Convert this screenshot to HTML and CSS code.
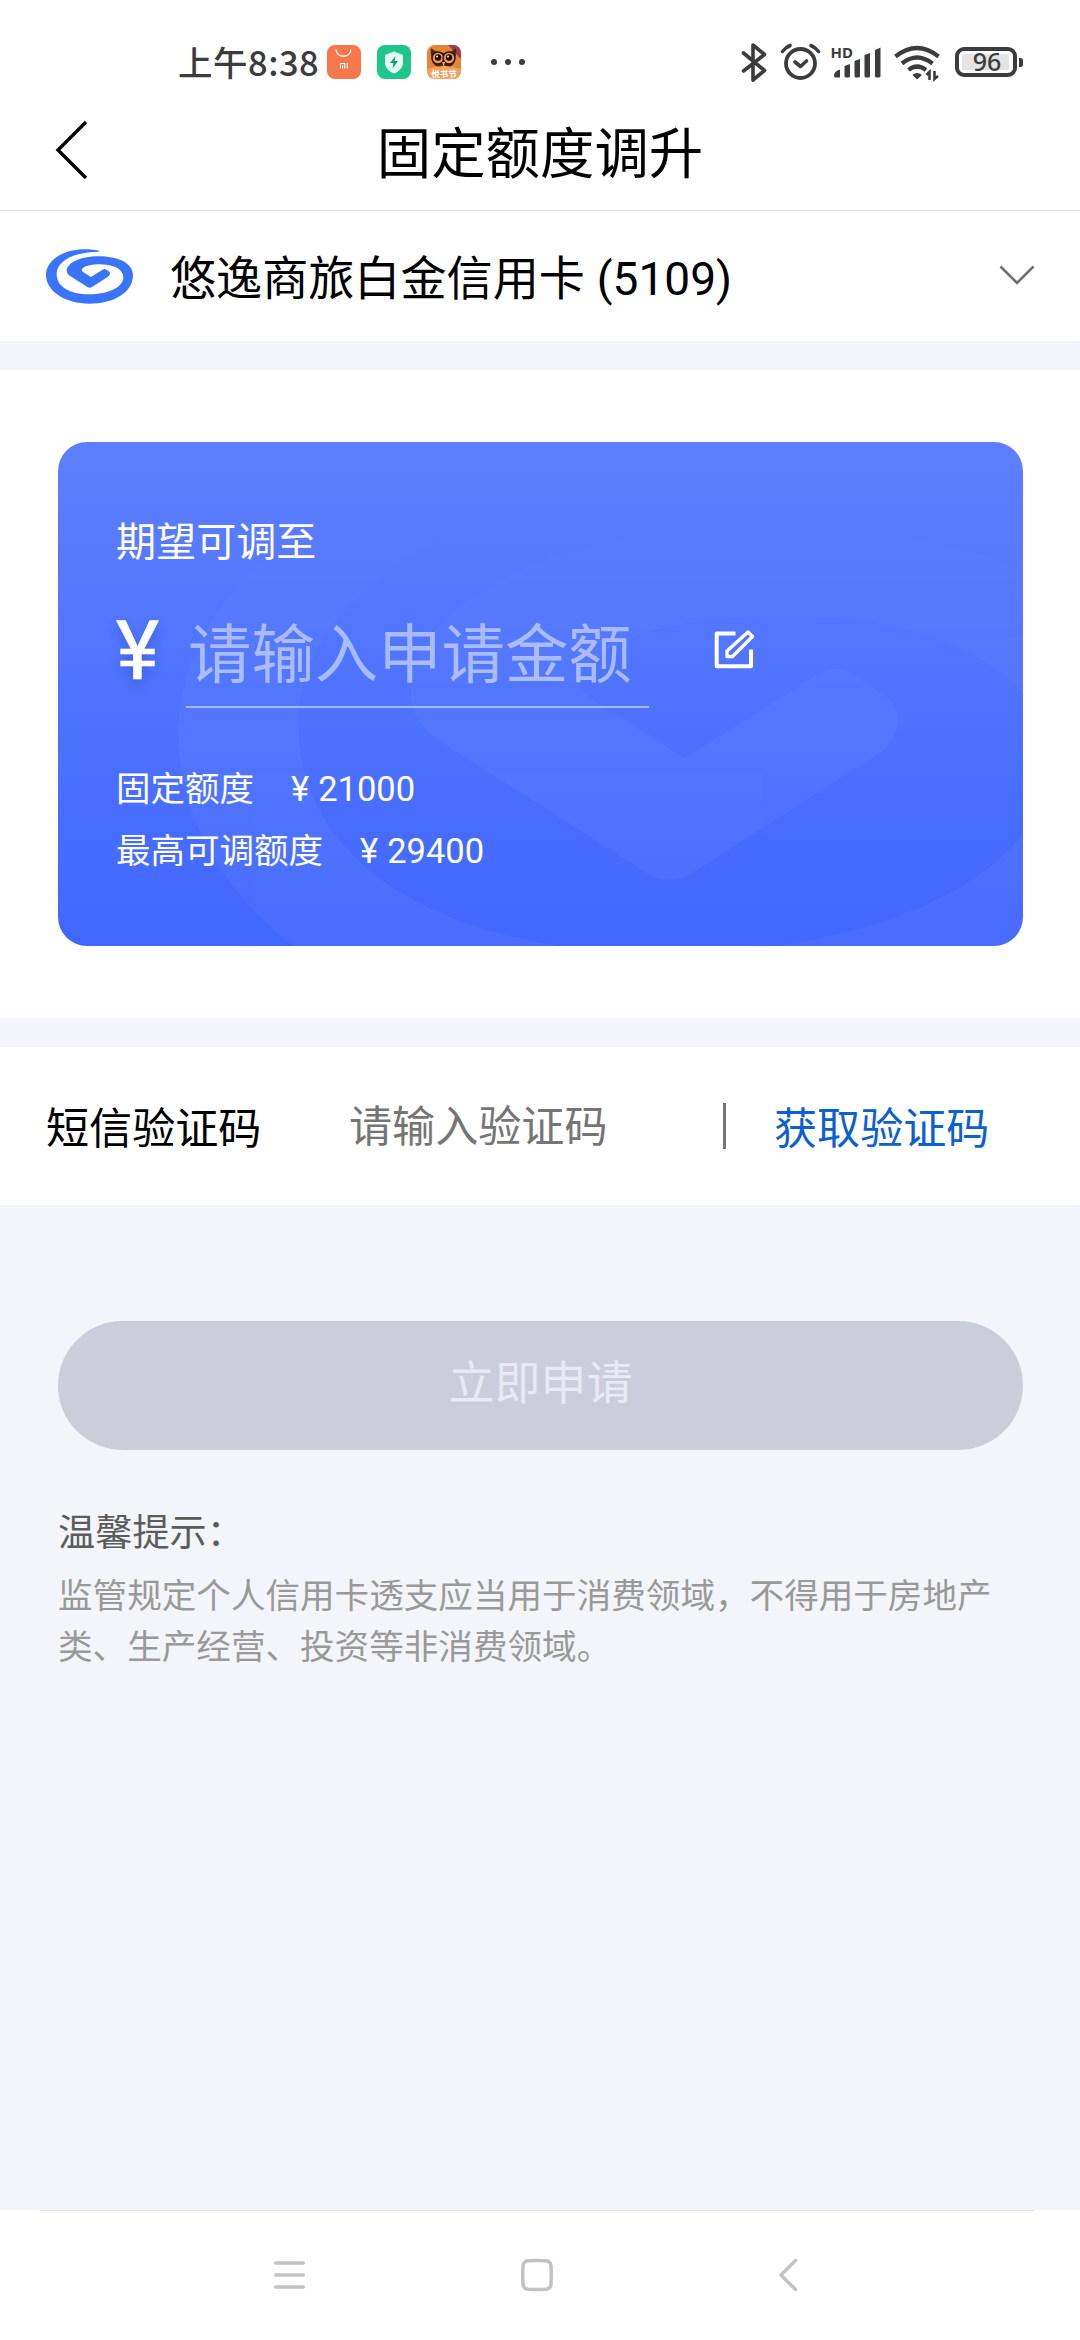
FILE: index.html
```html
<!DOCTYPE html>
<html lang="zh-CN">
<head>
<meta charset="utf-8">
<title>固定额度调升</title>
<link rel="stylesheet" href="styles.css">
</head>
<body>
<svg width="0" height="0" class="defs" aria-hidden="true">
  <symbol id="swirl" viewBox="0 0 330 222">
    <path d="M189 35C150 26 100 30 68 50C42 66 30 86 30 108C30 158 90 194 160 194C235 194 291 160 291 108C291 70 240 52 190 52C130 52 92 72 92 97Q92 104 99 109L154 144Q161 149 168 144L218 112Q226 103 218 97L209 91Q205 89 200 92L165 114L140 98Q134 93 140 88C150 79 172 76 190 76C235 76 262 92 262 115C262 146 215 166 160 166C100 166 62 142 62 105C62 66 115 38 189 38Z"/>
  </symbol>
</svg>
<div class="screen">
  <div class="status">
    <span class="time">上午8:38</span>
    <div class="apps">
      <svg width="34" height="34" viewBox="0 0 34 34"><rect width="34" height="34" rx="8" fill="#f5774a"/><path d="M9 4.500c1 9 14 9 15 0" fill="none" stroke="#fff" stroke-width="1.400"/><path d="M13.500 23.500v-5h4.200v5M15.600 20v3.500M20.200 18v5.500" fill="none" stroke="#fff" stroke-width="1.100"/></svg>
      <svg width="34" height="34" viewBox="0 0 34 34"><rect width="34" height="34" rx="8" fill="#1fc68c"/><path d="M17 6.500l9 3.500v7c0 6-4 9.500-9 11.500c-5-2-9-5.500-9-11.500v-7z" fill="#e5fbf3"/><path d="M18.500 11l-5.500 7h3.500l-1 5.500l5.500-7.500h-3.500z" fill="#159b70"/></svg>
      <svg width="34" height="34" viewBox="0 0 34 34"><defs><clipPath id="r"><rect width="34" height="34" rx="8"/></clipPath></defs><g clip-path="url(#r)"><path d="M0 0h34v34H0z" fill="#e5853c"/><path d="M21 0h13v14z" fill="#a33b50"/><path d="M4 3q4 4 13 5q9-1 12-5q1 6-1 10q0 8-6 9q-3 0-5-2q-2 2-5 2q-7-1-7-9Q3 9 4 3z" fill="#54260f"/><circle cx="11" cy="13" r="6" fill="#ed9b54" stroke="#321408" stroke-width="1.500"/><circle cx="22" cy="13" r="6" fill="#ed9b54" stroke="#321408" stroke-width="1.500"/><circle cx="11" cy="12.500" r="3.200" fill="#1c0e0b"/><circle cx="22" cy="12.500" r="3.200" fill="#1c0e0b"/><circle cx="10" cy="11.500" r="1" fill="#fff"/><circle cx="21" cy="11.500" r="1" fill="#fff"/><path d="M15 17h3l-1.500 4z" fill="#ffb35c"/><path d="M0 24q17-6 34 0v10H0z" fill="#efa362"/></g><text x="17" y="31.500" text-anchor="middle" class="tiny">悦书节</text></svg>
    </div>
    <svg class="dots" width="36" height="8" viewBox="0 0 36 8" fill="#3c3c3c"><circle cx="4" cy="4" r="3"/><circle cx="18" cy="4" r="3"/><circle cx="32" cy="4" r="3"/></svg>
    <svg class="system" width="290" height="42" viewBox="740 41 290 42" fill="none" stroke="#3c3c3c">
      <path d="M743.500 53l21 17.500L753 80V45l11.500 9.500L743.500 71" stroke-width="3.600" stroke-linejoin="round" stroke-linecap="round"/>
      <circle cx="800.500" cy="63.500" r="14.500" stroke-width="3.800"/>
      <path d="M782.500 51.500q3-4 7.500-6M818.500 51.500q-3-4-7.500-6" stroke-width="3.600" stroke-linecap="round"/>
      <path d="M795 62l5.500 4.500l6-5.500" stroke-width="3.600" stroke-linecap="round" stroke-linejoin="round"/>
      <path d="M834 76q0-5 6-6.500v8h-4.500q-1.500 0-1.500-1.500zM844.500 66l5.500-2v12q0 1.500-1.500 1.500H846q-1.500 0-1.500-1.500zM854.500 61l5.500-2v17q0 1.500-1.500 1.500h-2.500q-1.500 0-1.500-1.500zM864.500 55l5.500-2v23q0 1.500-1.500 1.500h-2.500q-1.500 0-1.500-1.500zM875 50l5.500-2.500v28.500q0 1.500-1.500 1.500h-2.500q-1.500 0-1.500-1.500z" fill="#3c3c3c" stroke="none"/>
      <path d="M895.500 56.500q21.500-17 43 0M902 63.500q15-12 30.500 0M908.500 70q8.500-7 17.500 0" stroke-width="4.200"/>
      <path d="M912.500 75q4.500-4 9.500 0l-5 4.500z" fill="#3c3c3c" stroke="none"/>
      <path d="M926.500 75l3-3v8M938 76l-3.500 3V71" stroke-width="2.600"/>
      <rect x="957" y="49" width="58" height="26" rx="7" stroke-width="4"/>
      <rect x="962" y="54" width="47" height="16" rx="2" fill="#e4e4e4" stroke="none"/>
      <path d="M1019 58h1.500q2.500 0 2.500 2.500v4q0 2.500-2.500 2.500h-1.500z" fill="#3c3c3c" stroke="none"/>
      <text class="hd" x="830.500" y="57.500">HD</text>
      <text class="pct" x="987" y="71" text-anchor="middle">96</text>
    </svg>
  </div>

  <header class="header">
    <svg class="back" width="36" height="60" viewBox="0 0 36 60"><path d="M32 2L4 30L32 58" fill="none" stroke="#000" stroke-width="3.400"/></svg>
    <h1>固定额度调升</h1>
  </header>

  <div class="account">
    <svg class="logo"><use href="#swirl"/></svg>
    <span class="name">悠逸商旅白金信用卡</span><span class="tail">(5109)</span>
    <svg class="chev" width="36" height="22" viewBox="0 0 36 22"><path d="M1.500 1.500L18 18L34.500 1.500" fill="none" stroke="#707070" stroke-width="2.600"/></svg>
  </div>

  <section class="limit">
    <div class="card">
      <svg class="mark"><use href="#swirl"/></svg>
      <div class="label">期望可调至</div>
      <div class="amount">
        <span class="yen">¥</span>
        <span class="field">请输入申请金额</span>
        <svg width="42" height="42" viewBox="0 0 42 42" fill="none" stroke="#fff" stroke-width="3.400" stroke-linejoin="round"><path d="M21.500 4.500H2.700V37.300H37V20.500" stroke-width="4"/><path d="M13 27.500v-5.500L34 3L38.500 7.500L18.500 27.500z"/></svg>
      </div>
      <div class="row"><span>固定额度</span><span class="money"><i>¥</i>21000</span></div>
      <div class="row"><span>最高可调额度</span><span class="money"><i>¥</i>29400</span></div>
    </div>
  </section>

  <div class="sms">
    <span class="sms-label">短信验证码</span>
    <span class="sms-input">请输入验证码</span>
    <span class="bar"></span>
    <span class="sms-get">获取验证码</span>
  </div>

  <div class="button">立即申请</div>
  <div class="tips">
    <div class="tips-title">温馨提示：</div>
    <p>监管规定个人信用卡透支应当用于消费领域，不得用于房地产类、生产经营、投资等非消费领域。</p>
  </div>

  <nav class="nav">
    <svg width="36" height="36" viewBox="0 0 36 36" stroke="#c2c2c2" stroke-width="3.400" stroke-linecap="round"><path d="M4.700 6H32.300M4.700 18H32.300M4.700 30H32.300"/></svg>
    <svg width="36" height="36" viewBox="0 0 36 36" fill="none" stroke="#c2c2c2" stroke-width="3.500"><path d="M9 3.700Q18 3.300 27 3.700Q31.500 4 32 9Q32.500 18 32 27Q31.500 32 27 32.300Q18 32.700 9 32.300Q4.500 32 4 27Q3.500 18 4 9Q4.500 4 9 3.700z"/></svg>
    <svg width="36" height="36" viewBox="0 0 36 36" fill="none" stroke="#c2c2c2" stroke-width="3.300" stroke-linecap="round" stroke-linejoin="round"><path d="M28.500 3.500L14 18L28.500 32.500"/></svg>
  </nav>
</div>
</body>
</html>
```
FILE: styles.css
```css
* { box-sizing: border-box; }
body { margin: 0; background: #f3f5fa; font-family: "Noto Sans CJK SC", sans-serif; }
svg { display: block; flex: none; }
.defs { display: none; }
.screen { width: 1080px; height: 2340px; display: flex; flex-direction: column; overflow: hidden; }
.screen > * { flex: none; }

.status { height: 100px; background: #fff; display: flex; align-items: flex-start; padding-left: 178px; }
.time { width: 149px; margin-top: 36px; font-size: 34.500px; line-height: 50px; letter-spacing: .5px; font-weight: 500; color: #3c3c3c; white-space: nowrap; }
.apps { display: flex; gap: 16px; margin-top: 45px; }
.tiny { font-size: 8.500px; font-weight: 700; fill: #fff; }
.dots { margin: 58px 0 0 29px; }
.system { margin: 41px 0 0 214px; }
.hd { font: 700 15px "Noto Sans", sans-serif; fill: #3c3c3c; stroke: none; }
.pct { font: 500 25px "Noto Sans", sans-serif; fill: #3c3c3c; stroke: none; }

.header { height: 111px; background: #fff; border-bottom: 1px solid #dedede; display: flex; align-items: flex-start; }
.back { margin: 20px 0 0 54px; }
.header h1 { margin: 13px 90px 0 0; flex: 1; text-align: center; font-size: 54.400px; line-height: 74px; font-weight: 400; color: #000; }

.account { height: 130px; background: #fff; display: flex; align-items: center; padding: 0 28px 0 36px; color: #000; }
.logo { width: 110px; height: 74px; fill: #3a74fb; margin-right: 24px; }
.name { font-size: 46.100px; line-height: 60px; padding-bottom: 3px; }
.tail { font: 400 46px/60px Roboto, sans-serif; margin-left: 12px; padding-top: 5px; }
.chev { margin: 0 17px 0 auto; }

.limit { height: 677px; border-top: 29px solid #f3f5fa; background: #fff; padding: 72px 57px 0 58px; }
.card { position: relative; height: 504px; border-radius: 29px; overflow: hidden; background: linear-gradient(#5d7fff, #4067ff); padding: 68px 58px 0; color: #fff; }
.mark { position: absolute; left: 8px; top: -111px; width: 1237px; height: 832px; fill: #fff; opacity: .04; -webkit-mask-image: linear-gradient(transparent 20%, #000 55%); mask-image: linear-gradient(transparent 20%, #000 55%); }
.label { font-size: 40.100px; line-height: 58px; }
.amount { display: flex; align-items: flex-start; margin-top: 36px; height: 104px; }
.yen { width: 70px; font: 400 82px/94px Roboto, sans-serif; -webkit-text-stroke: .7px #fff; text-shadow: 0 6px 12px rgba(20, 50, 160, .3); }
.field { width: 463px; height: 104px; border-bottom: 2px solid #a5b9ff; font-size: 63.400px; line-height: 91px; color: #a7bbff; padding-left: 2px; margin-right: 65px; white-space: nowrap; }
.amount svg { margin-top: 25px; }
.row { display: flex; height: 62px; font-size: 34.500px; line-height: 50px; }
.amount + .row { margin-top: 53px; }
.money { margin-left: 37px; padding-top: 3px; font-family: Roboto, sans-serif; }
.money i { font-style: normal; margin-right: 9px; }

.sms { height: 187px; border-top: 29px solid #f3f5fa; background: #fff; display: flex; align-items: center; padding-left: 46px; font-size: 43.100px; line-height: 60px; color: #000; }
.sms-label { width: 303px; padding-bottom: 3px; }
.sms-input { width: 374px; padding-bottom: 7px; color: #757575; }
.bar { width: 3px; height: 46px; background: #777; }
.sms-get { margin-left: 48px; padding-bottom: 3px; color: #0b60d2; }

.button { margin: 116px 57px 0 58px; height: 129px; border-radius: 65px; background: #cbceda; text-align: center; color: #e7e9f3; font-size: 46px; line-height: 117px; }
.tips { padding: 54px 46px 0 58px; color: #999; font-size: 34.600px; line-height: 51px; }
.tips-title { font-size: 37.200px; line-height: 52px; color: #5c5c5c; }
.tips p { margin: 12px 0 0; }

.nav { margin-top: auto; height: 130px; display: flex; align-items: flex-start; padding: 47px 0 0 271px; gap: 212px; background: linear-gradient(90deg, transparent 0 40px, #e4e4e4 40px 1035px, transparent 1035px) 0 0 / 100% 1px no-repeat, #fff; }
```
